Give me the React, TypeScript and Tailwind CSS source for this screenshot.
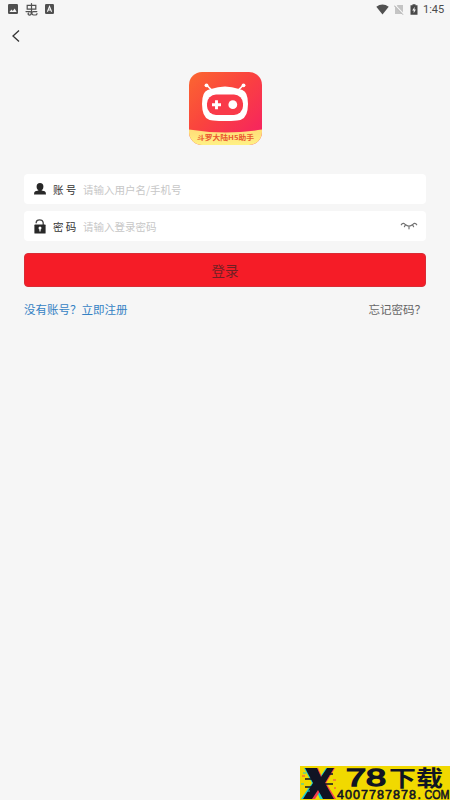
import React from "react";

const cjk = "font-['Noto_Sans_CJK_SC',sans-serif]";

function StatusBar() {
  return (
    <header className="flex h-[18px] items-center justify-between pl-2 pr-[6px]">
      <div className="flex items-center">
        <svg width="10" height="10" viewBox="0 0 10 10">
          <rect width="10" height="10" rx="1.2" fill="#505050" />
          <path d="M1.5 8 3.4 5.5 4.8 7 6.7 4.6 8.6 8z" fill="#f5f5f5" />
        </svg>
        <svg className="ml-[7px]" width="13" height="13" viewBox="0 0 13 13" fill="none" stroke="#505050" strokeWidth="1.2" strokeLinecap="round">
          <path d="M6.5.6v8.2M2.2 2.3h8.6v3.9H2.2zM1 8.6h4c2 0 1.5 3.5-.5 3.5-1.7 0-1.9-1.7-.7-2.1M11.8 8.6H8.4C6.2 8.6 6.4 12 8.6 12h1.7q1.7 0 1.7-1.3" />
        </svg>
        <svg className="ml-[7px]" width="9" height="10" viewBox="0 0 9 10">
          <rect width="9" height="10" rx="1.2" fill="#505050" />
          <path d="M2.4 7.8 4.5 2.5 6.6 7.8M3.2 6h2.6" fill="none" stroke="#f5f5f5" strokeWidth="1.1" />
        </svg>
      </div>
      <div className="flex items-center">
        <svg width="13" height="11" viewBox="0 0 13 11">
          <path d="M.3 2.7Q6.5-1.9 12.7 2.7L6.5 10.5z" fill="#505050" />
        </svg>
        <svg className="ml-[5px]" width="10" height="11" viewBox="0 0 10 11">
          <path d="M3.5 1H9v9H1V3.5z" fill="#c4c4c4" />
          <path d="m.5 1 9 9.5" stroke="#f5f5f5" strokeWidth="2" />
          <path d="m.2 1.6 8.7 9" stroke="#969696" strokeWidth=".9" />
        </svg>
        <svg className="ml-[6px]" width="8" height="11" viewBox="0 0 8 11">
          <path d="M.5 1.3h2V.2h3v1.1h2v9.5h-7z" fill="#484848" />
          <path d="M4.7 2.8 2.2 6.4h1.5v2.8l2.2-3.8H4.4z" fill="#f5f5f5" />
        </svg>
        <span className="ml-[5px] w-[21px] whitespace-nowrap pt-[2px] font-[Roboto,sans-serif] text-[11px] leading-[14px] text-[#4b4b4b]">1:45</span>
      </div>
    </header>
  );
}

function AppLogo() {
  return (
    <svg className="mx-auto block" width="73" height="73" viewBox="0 0 73 73">
      <defs>
        <linearGradient id="logoRed" x1="0" y1="0" x2="1" y2="1">
          <stop stopColor="#fb6730" />
          <stop offset=".45" stopColor="#fa423f" />
          <stop offset="1" stopColor="#f51e66" />
        </linearGradient>
        <linearGradient id="logoYellow" x1="0" y1="0" x2="0" y2="1">
          <stop stopColor="#ffdc78" />
          <stop offset="1" stopColor="#fff184" />
        </linearGradient>
        <clipPath id="logoShape">
          <rect width="73" height="73" rx="13" />
        </clipPath>
      </defs>
      <g clipPath="url(#logoShape)">
        <rect width="73" height="73" fill="url(#logoRed)" />
        <path d="M0 57.5Q36.5 63.5 73 57.5V73H0z" fill="url(#logoYellow)" />
      </g>
      <path d="m18 13.5 5 4.8M54 13.5l-5 4.8" stroke="#fff" strokeWidth="1.6" />
      <circle cx="17.5" cy="13.3" r="1.9" fill="#fff" />
      <circle cx="54.5" cy="13.3" r="1.9" fill="#fff" />
      <path d="M22 17Q36 12 50 17Q57.5 18 58.5 26Q59.5 32 58.5 38Q57 48 48 48.5Q36 49.5 24 48.5Q15 48 13.5 38Q12.5 32 13.5 26Q14.5 18 22 17z" fill="#fff" />
      <rect x="18" y="22.5" width="36" height="20.5" rx="9" fill="#f93a49" />
      <path d="M27.5 28.2v9M23 32.7h9" stroke="#fff" strokeWidth="2.9" />
      <circle cx="43.8" cy="32.7" r="4.4" fill="#fff" />
      <text x="8" y="67.5" textLength="57" lengthAdjust="spacingAndGlyphs" fontFamily="Noto Sans CJK SC, sans-serif" fontSize="6.6" fontWeight="700" fill="#e9572f">斗罗大陆H5助手</text>
    </svg>
  );
}

function UserIcon() {
  return (
    <svg width="12" height="12" viewBox="0 0 12 12" fill="#282828">
      <ellipse cx="6" cy="3.7" rx="3.4" ry="3.6" />
      <path d="M4.3 6.2h3.4v1.2l3 .9Q12 8.7 12 11.4H0Q0 8.7 1.3 8.3l3-.9z" />
    </svg>
  );
}

function LockIcon() {
  return (
    <svg width="12" height="15" viewBox="0 0 12 15">
      <path d="M2.2 4.2V3.4Q2.4.8 5.6.8T9.2 3.7V6" fill="none" stroke="#444" strokeWidth="1.3" />
      <rect x=".4" y="5.6" width="11.2" height="9" rx=".6" fill="#282828" />
      <circle cx="6" cy="9" r="1.5" fill="#fff" />
      <path d="M5.4 9h1.2v3.6H5.4z" fill="#fff" />
    </svg>
  );
}

function ClosedEye() {
  return (
    <svg width="18" height="8" viewBox="0 0 18 8" fill="none" stroke="#737373" strokeWidth="1.2" strokeLinecap="round">
      <path d="M1.3 2.8Q2 1.2 3.6 1.4 4.5 1.6 5.2 2.5 9 5.6 12.8 2.5 13.5 1.6 14.4 1.4 16 1.2 16.7 2.8M5.3 3 4.4 4.7M9 4.4v2.4M12.7 3l.9 1.7" />
    </svg>
  );
}

function Field({ icon, label, placeholder, action }: {
  icon: React.ReactNode;
  label: string;
  placeholder: string;
  action?: React.ReactNode;
}) {
  return (
    <div className="flex h-[30px] items-center rounded-[4px] bg-white pl-[10px] pr-2">
      {icon}
      <span className="ml-[7px] w-[30px] whitespace-nowrap pt-[2px] text-[10.5px] leading-4 text-[#333]">{label}</span>
      <span className="pt-[2px] text-[10.5px] leading-4 text-[#c7c7c7]">{placeholder}</span>
      {action && <span className="ml-auto">{action}</span>}
    </div>
  );
}

function Watermark() {
  return (
    <svg className="absolute bottom-0 right-0" width="150" height="34" viewBox="0 0 150 34">
      <rect width="150" height="34" fill="#f1d900" />
      <path d="M4 2h11l5 9 6-9h6l-9 15 7 16H20l-4-9-5 9H1l11-16z" fill="#19cfd0" />
      <path d="M7 2h11l4 9 6-9h7l-9 15 10 16H25l-4-9-6 9H6l11-16z" fill="#f13d50" />
      <path d="M5 2h12l4 9 6-9h7l-9 15 9 16H23l-5-9-6 9H3l10-16z" fill="#101423" />
      <path d="M5 13h9M5 21h7M24 18h9M29 8h4" stroke="#101423" strokeWidth="1.6" />
      <path d="M1 18h3M7 25h3M3 7h3" stroke="#19cfd0" />
      <path d="M33 14h3M2 10h3M34 22h2" stroke="#f13d50" />
      <g fill="#101423" stroke="#101423">
        <text x="46" y="20" fontFamily="Liberation Sans, sans-serif" fontSize="24" textLength="40" lengthAdjust="spacingAndGlyphs" strokeWidth="1.5">78</text>
        <text x="89" y="20" fontFamily="Noto Sans CJK SC, sans-serif" fontWeight="700" fontSize="21.5" textLength="54" lengthAdjust="spacingAndGlyphs" strokeWidth="0">下载</text>
        <g fontFamily="Liberation Sans, sans-serif" fontSize="12.5" strokeWidth=".6">
          <text x="37" y="33" textLength="79" lengthAdjust="spacing">4007787878</text>
          <text x="117.5" y="33">.</text>
          <text x="124.5" y="33" textLength="25" lengthAdjust="spacingAndGlyphs">COM</text>
        </g>
      </g>
    </svg>
  );
}

export default function App() {
  return (
    <main className={`relative h-[800px] w-[450px] overflow-hidden bg-[#f6f6f6] ${cjk}`}>
      <StatusBar />
      <nav className="flex h-9 items-center pl-3">
        <svg width="8" height="12" viewBox="0 0 8 12" fill="none" stroke="#333" strokeWidth="1.3">
          <path d="M7 .5 1 6l6 5.5" />
        </svg>
      </nav>
      <div className="pt-[18px]">
        <AppLogo />
      </div>
      <form className="mt-[29px] px-6">
        <div className="flex flex-col gap-[7px]">
          <Field icon={<UserIcon />} label="账 号" placeholder="请输入用户名/手机号" />
          <Field icon={<LockIcon />} label="密 码" placeholder="请输入登录密码" action={<ClosedEye />} />
        </div>
        <button type="button" className="mt-3 flex h-[34px] w-full items-center justify-center rounded-[4px] border border-[#d92c35] bg-[#f51c27] pb-px text-[13.5px] leading-5 text-[#702024]">登录</button>
        <div className="mt-[13px] flex justify-between text-[11.5px] leading-[18px]">
          <span className="text-[#3582c4]">没有账号？立即注册</span>
          <span className="text-[#666]">忘记密码？</span>
        </div>
      </form>
      <Watermark />
    </main>
  );
}
